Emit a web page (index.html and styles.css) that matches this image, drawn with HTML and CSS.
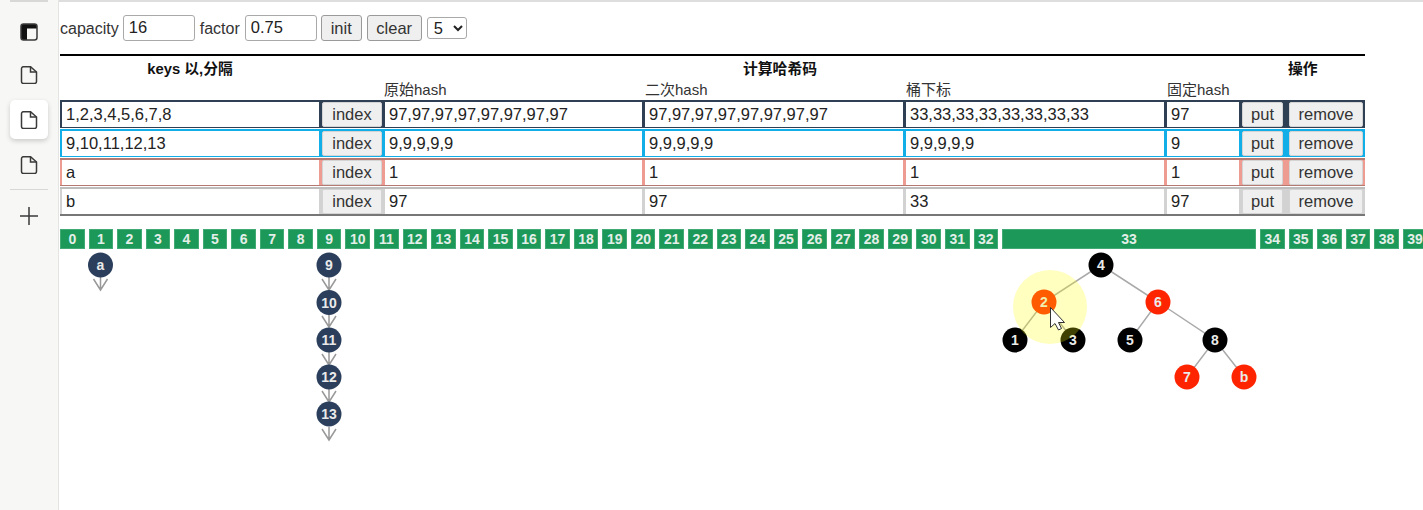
FILE: index.html
```html
<!DOCTYPE html>
<html lang="zh">
<head>
<meta charset="utf-8">
<title>HashMap</title>
<link rel="stylesheet" href="styles.css">
</head>
<body>
<div class="app">
  <aside class="sidebar">
    <div class="side-sep side-sep-top"></div>
    <div class="side-item side-panel">
      <svg class="icon" viewBox="0 0 18 18"><path class="fill-dark" d="M3 1h12a2.500 2.500 0 0 1 2 2v2.500H7V17H3a2.500 2.500 0 0 1-2-2V3a2.500 2.500 0 0 1 2-2z"/><rect class="stroke" x="1" y="1" width="16" height="16" rx="2.500"/></svg>
    </div>
    <div class="side-item side-doc">
      <svg class="icon" viewBox="0 0 18 18"><path class="stroke" d="M4 .7h6.500L16.500 6v9.500a2 2 0 0 1-2 2H3.500a2 2 0 0 1-2-2V2.700a2 2 0 0 1 2-2z"/><path class="stroke" d="M10.500 .7V6H16.500"/></svg>
    </div>
    <div class="side-item side-doc side-active">
      <svg class="icon" viewBox="0 0 18 18"><path class="stroke" d="M4 .7h6.500L16.500 6v9.500a2 2 0 0 1-2 2H3.500a2 2 0 0 1-2-2V2.700a2 2 0 0 1 2-2z"/><path class="stroke" d="M10.500 .7V6H16.500"/></svg>
    </div>
    <div class="side-item side-doc">
      <svg class="icon" viewBox="0 0 18 18"><path class="stroke" d="M4 .7h6.500L16.500 6v9.500a2 2 0 0 1-2 2H3.500a2 2 0 0 1-2-2V2.700a2 2 0 0 1 2-2z"/><path class="stroke" d="M10.500 .7V6H16.500"/></svg>
    </div>
    <div class="side-sep"></div>
    <div class="side-item side-plus">
      <svg class="icon" viewBox="0 0 18 18"><path class="stroke" d="M9 0v18M0 9h18"/></svg>
    </div>
  </aside>
  <main class="main">
    <div class="toolbar">
      <label class="field">capacity</label>
      <input class="input tool-input" value="16">
      <label class="field field-factor">factor</label>
      <input class="input tool-input" value="0.75">
      <button class="btn tool-btn btn-init">init</button>
      <button class="btn tool-btn btn-clear">clear</button>
      <select class="tool-select"><option>5</option></select>
    </div>
    <div class="table">
      <div class="head">
        <div class="th th-keys">keys 以,分隔</div>
        <div class="th th-hash">计算哈希码</div>
        <div class="th th-ops">操作</div>
      </div>
      <div class="subhead">
        <div class="sub sub-a">原始hash</div>
        <div class="sub sub-b">二次hash</div>
        <div class="sub sub-c">桶下标</div>
        <div class="sub sub-d">固定hash</div>
      </div>
      <div class="row row-dark">
        <input class="input" value="1,2,3,4,5,6,7,8">
        <button class="btn">index</button>
        <input class="input" value="97,97,97,97,97,97,97,97">
        <input class="input" value="97,97,97,97,97,97,97,97">
        <input class="input" value="33,33,33,33,33,33,33,33">
        <input class="input" value="97">
        <button class="btn">put</button>
        <button class="btn btn-remove">remove</button>
      </div>
      <div class="row row-blue">
        <input class="input" value="9,10,11,12,13">
        <button class="btn">index</button>
        <input class="input" value="9,9,9,9,9">
        <input class="input" value="9,9,9,9,9">
        <input class="input" value="9,9,9,9,9">
        <input class="input" value="9">
        <button class="btn">put</button>
        <button class="btn btn-remove">remove</button>
      </div>
      <div class="row row-salmon">
        <input class="input" value="a">
        <button class="btn">index</button>
        <input class="input" value="1">
        <input class="input" value="1">
        <input class="input" value="1">
        <input class="input" value="1">
        <button class="btn">put</button>
        <button class="btn btn-remove">remove</button>
      </div>
      <div class="row row-grey">
        <input class="input" value="b">
        <button class="btn">index</button>
        <input class="input" value="97">
        <input class="input" value="97">
        <input class="input" value="33">
        <input class="input" value="97">
        <button class="btn">put</button>
        <button class="btn btn-remove">remove</button>
      </div>
    </div>
    <div class="buckets">
      <div class="bucket">0</div><div class="bucket">1</div><div class="bucket">2</div><div class="bucket">3</div><div class="bucket">4</div><div class="bucket">5</div><div class="bucket">6</div><div class="bucket">7</div><div class="bucket">8</div><div class="bucket">9</div><div class="bucket">10</div><div class="bucket">11</div><div class="bucket">12</div><div class="bucket">13</div><div class="bucket">14</div><div class="bucket">15</div><div class="bucket">16</div><div class="bucket">17</div><div class="bucket">18</div><div class="bucket">19</div><div class="bucket">20</div><div class="bucket">21</div><div class="bucket">22</div><div class="bucket">23</div><div class="bucket">24</div><div class="bucket">25</div><div class="bucket">26</div><div class="bucket">27</div><div class="bucket">28</div><div class="bucket">29</div><div class="bucket">30</div><div class="bucket">31</div><div class="bucket">32</div><div class="bucket bucket-wide">33</div><div class="bucket">34</div><div class="bucket">35</div><div class="bucket">36</div><div class="bucket">37</div><div class="bucket">38</div><div class="bucket">39</div>
    </div>
    <svg class="canvas" viewBox="60 249 1363 261">
      <g class="links">
        <path d="M1101 265L1044 302L1015 340M1044 302L1073 340M1101 265L1158 302L1130 340M1158 302L1215 340L1187 377M1215 340L1244 377"/>
      </g>
      <g class="arrows">
        <path d="M100.500 277V290M93.500 279L100.500 290L107.500 279"/>
        <path d="M329 277V290M322 279L329 290L336 279"/>
        <path d="M329 314V327M322 316L329 327L336 316"/>
        <path d="M329 352V365M322 354L329 365L336 354"/>
        <path d="M329 389V402M322 391L329 402L336 391"/>
        <path d="M329 427V440M322 429L329 440L336 429"/>
      </g>
      <g class="node node-navy"><circle cx="100.500" cy="265" r="12.500"/><text x="100.500" y="270">a</text></g>
      <g class="node node-navy"><circle cx="329" cy="265" r="12.500"/><text x="329" y="270">9</text></g>
      <g class="node node-navy"><circle cx="329" cy="302.500" r="12.500"/><text x="329" y="307.500">10</text></g>
      <g class="node node-navy"><circle cx="329" cy="340" r="12.500"/><text x="329" y="345">11</text></g>
      <g class="node node-navy"><circle cx="329" cy="377" r="12.500"/><text x="329" y="382">12</text></g>
      <g class="node node-navy"><circle cx="329" cy="414" r="12.500"/><text x="329" y="419">13</text></g>
      <g class="node node-black"><circle cx="1101" cy="265" r="12.500"/><text x="1101" y="270">4</text></g>
      <g class="node node-red"><circle cx="1044" cy="302" r="12.500"/><text x="1044" y="307">2</text></g>
      <g class="node node-red"><circle cx="1158" cy="302" r="12.500"/><text x="1158" y="307">6</text></g>
      <g class="node node-black"><circle cx="1015" cy="340" r="12.500"/><text x="1015" y="345">1</text></g>
      <g class="node node-black"><circle cx="1073" cy="340" r="12.500"/><text x="1073" y="345">3</text></g>
      <g class="node node-black"><circle cx="1130" cy="340" r="12.500"/><text x="1130" y="345">5</text></g>
      <g class="node node-black"><circle cx="1215" cy="340" r="12.500"/><text x="1215" y="345">8</text></g>
      <g class="node node-red"><circle cx="1187" cy="377" r="12.500"/><text x="1187" y="382">7</text></g>
      <g class="node node-red"><circle cx="1244" cy="377" r="12.500"/><text x="1244" y="382">b</text></g>
      <circle class="halo" cx="1050" cy="307" r="37"/>
      <path class="cursor" d="M1050.500 307.500V327.500L1055 323.500L1058.500 330L1061.500 328.500L1058.500 322.500H1064.500Z"/>
    </svg>
  </main>
</div>
</body>
</html>
```
FILE: styles.css
```css
* { box-sizing: border-box; }
html, body { margin: 0; height: 100%; }
body {
  background: #fff;
  color: #222;
  font-family: "Liberation Sans", "Noto Sans CJK SC", sans-serif;
  font-size: 16px;
}
.app {
  display: flex;
  width: 1423px;
  height: 510px;
  overflow: hidden;
}
.sidebar {
  flex: 0 0 59px;
  display: flex;
  flex-direction: column;
  align-items: center;
  background: #f7f7f5;
  border-right: 1px solid #e4e4e2;
}
.side-item {
  width: 38px;
  height: 39px;
  display: flex;
  align-items: center;
  justify-content: center;
  margin-left: -1px;
}
.side-panel { height: 35px; margin-top: 12px; }
.side-doc { margin-top: 6px; }
.side-active {
  background: #fff;
  border-radius: 5px;
  box-shadow: 0 2px 5px rgba(0, 0, 0, .18);
}
.side-sep {
  width: 38px;
  height: 1px;
  margin: 5px 0 0 -1px;
  background: #d8d8d6;
}
.side-sep-top { height: 2px; margin-top: 0; }
.side-plus { margin-top: 6px; }
.icon { width: 18px; height: 18px; display: block; }
.stroke { fill: none; stroke: #3a3a3a; stroke-width: 1.5; }
.fill-dark { fill: #111; }
.main {
  flex: 1 1 auto;
  min-width: 0;
  padding: 13px 0 0 1px;
  border-top: 2px solid #dedede;
}
.toolbar {
  display: flex;
  align-items: center;
  gap: 4px;
  height: 26px;
}
.field { padding-top: 1px; color: #333; }
.field-factor { margin-left: 1px; margin-right: 1px; }
.input {
  min-width: 0;
  width: 100%;
  height: 25px;
  padding: 1px 4px 2px;
  border: 0;
  background: #fff;
  color: #222;
  font: 16.500px "Liberation Sans", sans-serif;
  outline: 0;
}
.tool-input {
  flex: 0 0 72px;
  height: 26px;
  padding: 0 5px 2px;
  border: 1px solid #a9a9a9;
  border-radius: 3px;
}
.btn {
  height: 25px;
  padding: 0;
  background: #efefef;
  border: 1px solid #d4d4d4;
  border-radius: 2px;
  color: #333;
  font: 16.500px "Liberation Sans", sans-serif;
}
.btn-remove { margin-left: 3px; }
.tool-btn {
  height: 26px;
  border: 1px solid #9a9a9a;
  border-radius: 3px;
  padding-top: 1px;
}
.btn-init { flex: 0 0 41px; }
.btn-clear { flex: 0 0 55px; margin-left: 1px; }
.tool-select {
  flex: 0 0 40px;
  height: 22px;
  margin-left: 1px;
  padding: 0 0 0 2px;
  background: #fff;
  border: 1px solid #a9a9a9;
  border-radius: 3px;
  color: #222;
  font: 16.500px "Liberation Sans", sans-serif;
}
.table { width: 1305px; margin-top: 13px; border-top: 2px solid #000; }
.head {
  display: grid;
  grid-template-columns: 260px 63px 782px 200px;
  height: 22px;
  align-items: center;
  color: #111;
  font-size: 14.800px;
  font-weight: 700;
}
.th-keys { text-align: center; }
.th-hash { grid-column: 3; text-align: center; padding-left: 12px; }
.th-ops { grid-column: 4; padding-left: 123px; }
.subhead {
  display: grid;
  grid-template-columns: 324px 261px 261px 261px 198px;
  height: 22px;
  padding-bottom: 2px;
  align-items: center;
  font-size: 15px;
  color: #333;
}
.sub-a { grid-column: 2; }
.sub-b { grid-column: 3; }
.sub-c { grid-column: 4; }
.sub-d { grid-column: 5; }
.row {
  display: grid;
  grid-template-columns: 257px 60px 257px 258px 258px 72px 41px 77px;
  column-gap: 3px;
  height: 28px;
  margin-bottom: 1px;
  padding: 0 2px;
  border-top: 2px solid;
  border-bottom: 1px solid;
}
.row-dark { background: #2f4055; border-color: #2f4055; }
.row-blue { background: #12aee8; border-color: #12aee8; }
.row-salmon { background: #ee9c92; border-color: #b47a72 #ee9c92 #b47a72; }
.row-grey {
  height: 29px;
  margin-bottom: 0;
  background: #d2d2d2;
  border-color: #bdbdbd #d2d2d2 #777;
  border-bottom-width: 2px;
}
.buckets { display: flex; gap: 4px; margin-top: 13px; height: 20px; }
.bucket {
  flex: 0 0 24.560px;
  display: flex;
  align-items: center;
  justify-content: center;
  background: #1c9858;
  border: 1px solid #43a975;
  color: #e4efe9;
  font-size: 14px;
  font-weight: 700;
}
.bucket-wide { flex-basis: 254px; }
.canvas { display: block; width: 1363px; height: 261px; }
.links path { fill: none; stroke: #aaa; stroke-width: 1.5; }
.arrows path { fill: none; stroke: #999; stroke-width: 1.5; }
.node text {
  fill: #eaeaea;
  font: 700 14px "Liberation Sans", sans-serif;
  text-anchor: middle;
}
.node-navy circle { fill: #2b3f5c; }
.node-black circle { fill: #000; }
.node-red circle { fill: #ff2400; }
.halo { fill: rgba(255, 255, 0, .25); }
.cursor { fill: #fff; stroke: #333; stroke-width: 1; }
```
